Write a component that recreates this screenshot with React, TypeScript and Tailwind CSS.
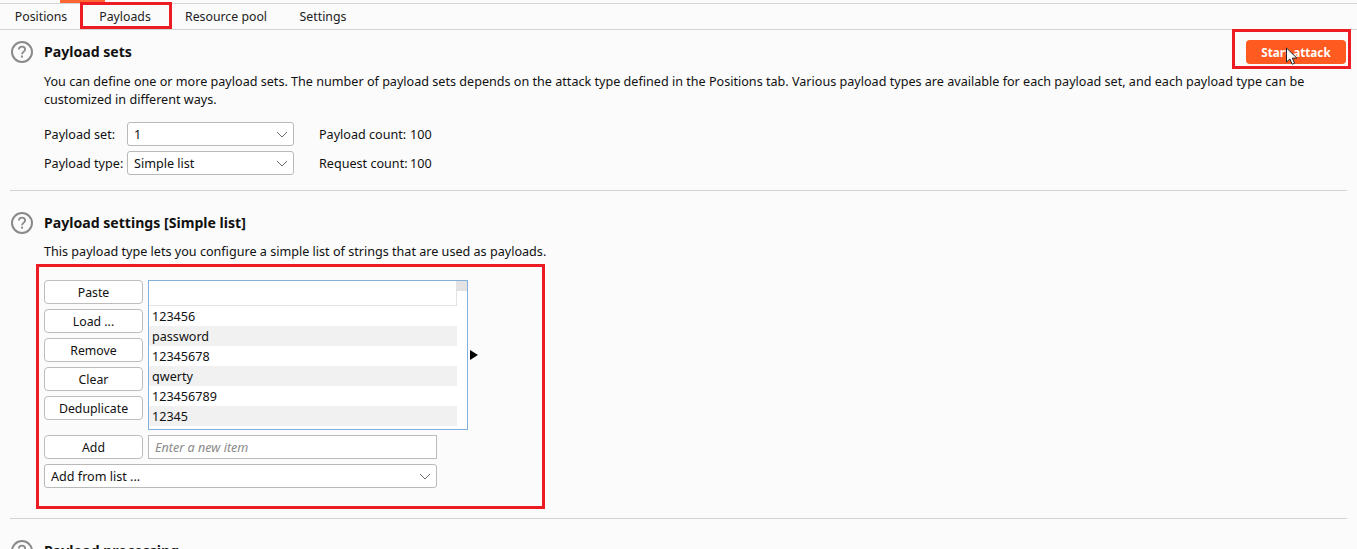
const font = { fontFamily: '"Noto Sans", sans-serif' };

function Help() {
  return (
    <svg width="24" height="24" viewBox="0 0 24 24" className="shrink-0" fill="none">
      <circle cx="12" cy="12" r="10" stroke="#8a8a8a" strokeWidth="2" />
      <path d="M8.9 9.6c0-1.9 1.3-3 3.1-3s3.1 1.1 3.1 2.8c0 2.4-3.1 2.5-3.1 4.8" stroke="#8a8a8a" strokeWidth="1.8" />
      <rect x="11" y="15.6" width="2" height="2" fill="#8a8a8a" />
    </svg>
  );
}

function Chevron() {
  return (
    <svg width="12" height="7" viewBox="0 0 12 7" fill="none">
      <path d="M1 1l5 5 5-5" stroke="#6b6b6b" strokeWidth="1" />
    </svg>
  );
}

function Select({ label, width }: { label: string; width: string }) {
  return (
    <div className={`${width} h-[24px] flex items-center justify-between pl-[6px] pr-[5px] bg-white border border-[#b9b9b9] rounded-[3px]`}>
      <span className="pt-[2px]">{label}</span>
      <Chevron />
    </div>
  );
}

function Btn({ label }: { label: string }) {
  return (
    <div className="w-[99px] h-[24px] pt-[2px] flex items-center justify-center bg-white border border-[#bdbdbd] rounded-[4px] text-[12.3px]">{label}</div>
  );
}

const items = ["123456", "password", "12345678", "qwerty", "123456789", "12345"];

export default function App() {
  return (
    <div style={font} className="relative w-[1357px] h-[549px] overflow-hidden bg-[#fbfbfb] text-[12.6px] leading-[18px] text-[#111]">
      <div className="h-[4px] border-b border-[#d4d4d4] pl-[60px]">
        <div className="w-[45px] h-[3px] bg-[#ff6633]" />
      </div>
      <div className="h-[26px] flex border-b border-[#d4d4d4] items-center text-[#222] text-[12.3px]">
        <div className="w-[82px] text-center">Positions</div>
        <div className="w-[86px] text-center">Payloads</div>
        <div className="w-[116px] text-center">Resource pool</div>
        <div className="w-[78px] text-center">Settings</div>
      </div>

      <section className="mx-[10px] h-[161px] border-b border-[#d4d4d4] pt-[10px]">
        <div className="flex items-center gap-[10px] h-[24px]">
          <Help />
          <h2 className="font-bold text-[14.1px]">Payload sets</h2>
        </div>
        <p className="ml-[34px] mt-[9px] w-[1280px]">
          You can define one or more payload sets. The number of payload sets depends on the attack type defined in the Positions tab. Various payload types are available for each payload set, and each payload type can be customized in different ways.
        </p>
        <div className="ml-[34px] mt-[13px] flex flex-col gap-[5px]">
          <div className="flex items-center">
            <span className="w-[83px] pt-[2px]">Payload set:</span>
            <Select label="1" width="w-[167px]" />
            <span className="ml-[25px] w-[91px] pt-[2px]">Payload count:</span>
            <span className="pt-[2px]">100</span>
          </div>
          <div className="flex items-center">
            <span className="w-[83px] pt-[2px]">Payload type:</span>
            <Select label="Simple list" width="w-[167px]" />
            <span className="ml-[25px] w-[91px] pt-[2px]">Request count:</span>
            <span className="pt-[2px]">100</span>
          </div>
        </div>
      </section>

      <section className="mx-[10px] h-[328px] border-b border-[#d4d4d4] pt-[20px]">
        <div className="flex items-center gap-[10px] h-[24px]">
          <Help />
          <h2 className="font-bold text-[14.1px]">Payload settings [Simple list]</h2>
        </div>
        <p className="ml-[34px] mt-[8px]">This payload type lets you configure a simple list of strings that are used as payloads.</p>
        <div className="ml-[34px] mt-[19px] flex gap-[5px]">
          <div className="flex flex-col gap-[5px]">
            <Btn label="Paste" />
            <Btn label="Load ..." />
            <Btn label="Remove" />
            <Btn label="Clear" />
            <Btn label="Deduplicate" />
          </div>
          <div className="flex items-center gap-[2px]">
            <div className="w-[320px] h-[150px] bg-white border border-[#84b0dc] flex flex-col">
              <div className="flex h-[25px]">
                <div className="w-[308px] border-b border-r border-[#e3e3e3]" />
                <div className="w-[10px] h-[10px] bg-[#e3e3e3]" />
              </div>
              <div className="w-[308px]">
                {items.map((item, i) => (
                  <div key={item} className={`h-[20px] pl-[3px] pt-[2px] flex items-center ${i % 2 ? "bg-[#f1f1f1]" : "bg-white"}`}>{item}</div>
                ))}
              </div>
            </div>
            <svg width="8" height="10" viewBox="0 0 8 10"><path d="M0 0l8 5-8 5z" fill="#000" /></svg>
          </div>
        </div>
        <div className="ml-[34px] mt-[5px] flex gap-[5px]">
          <Btn label="Add" />
          <div className="w-[289px] h-[24px] pl-[6px] pt-[2px] flex items-center bg-white border border-[#bdb9bd] italic text-[#8a8a8a]">Enter a new item</div>
        </div>
        <div className="ml-[34px] mt-[5px]">
          <Select label="Add from list ..." width="w-[393px]" />
        </div>
      </section>

      <section className="mx-[10px] pt-[20px]">
        <div className="flex items-center gap-[10px] h-[24px]">
          <Help />
          <h2 className="font-bold text-[14.1px]">Payload processing</h2>
        </div>
      </section>

      <div className="absolute left-[1246px] top-[40px] w-[100px] h-[24px] rounded-[4px] bg-[#ff5a1f] flex items-center justify-center text-white font-bold text-[11.7px]">Start attack</div>
      <svg className="absolute left-[1285px] top-[47px]" width="14" height="20" viewBox="0 0 14 20">
        <path d="M1.5 1v14l3.4-3 2.3 5.2 2.4-1-2.3-5.1h4.6z" fill="#fff" stroke="#222" strokeWidth="1" />
      </svg>

      <div className="absolute left-[80px] top-[2px] w-[92px] h-[27px] border-[3px] border-[#ed1c24]" />
      <div className="absolute left-[1232px] top-[29px] w-[119px] h-[40px] border-[3px] border-[#ed1c24]" />
      <div className="absolute left-[36px] top-[264px] w-[509px] h-[245px] border-[3px] border-[#ed1c24]" />
    </div>
  );
}
